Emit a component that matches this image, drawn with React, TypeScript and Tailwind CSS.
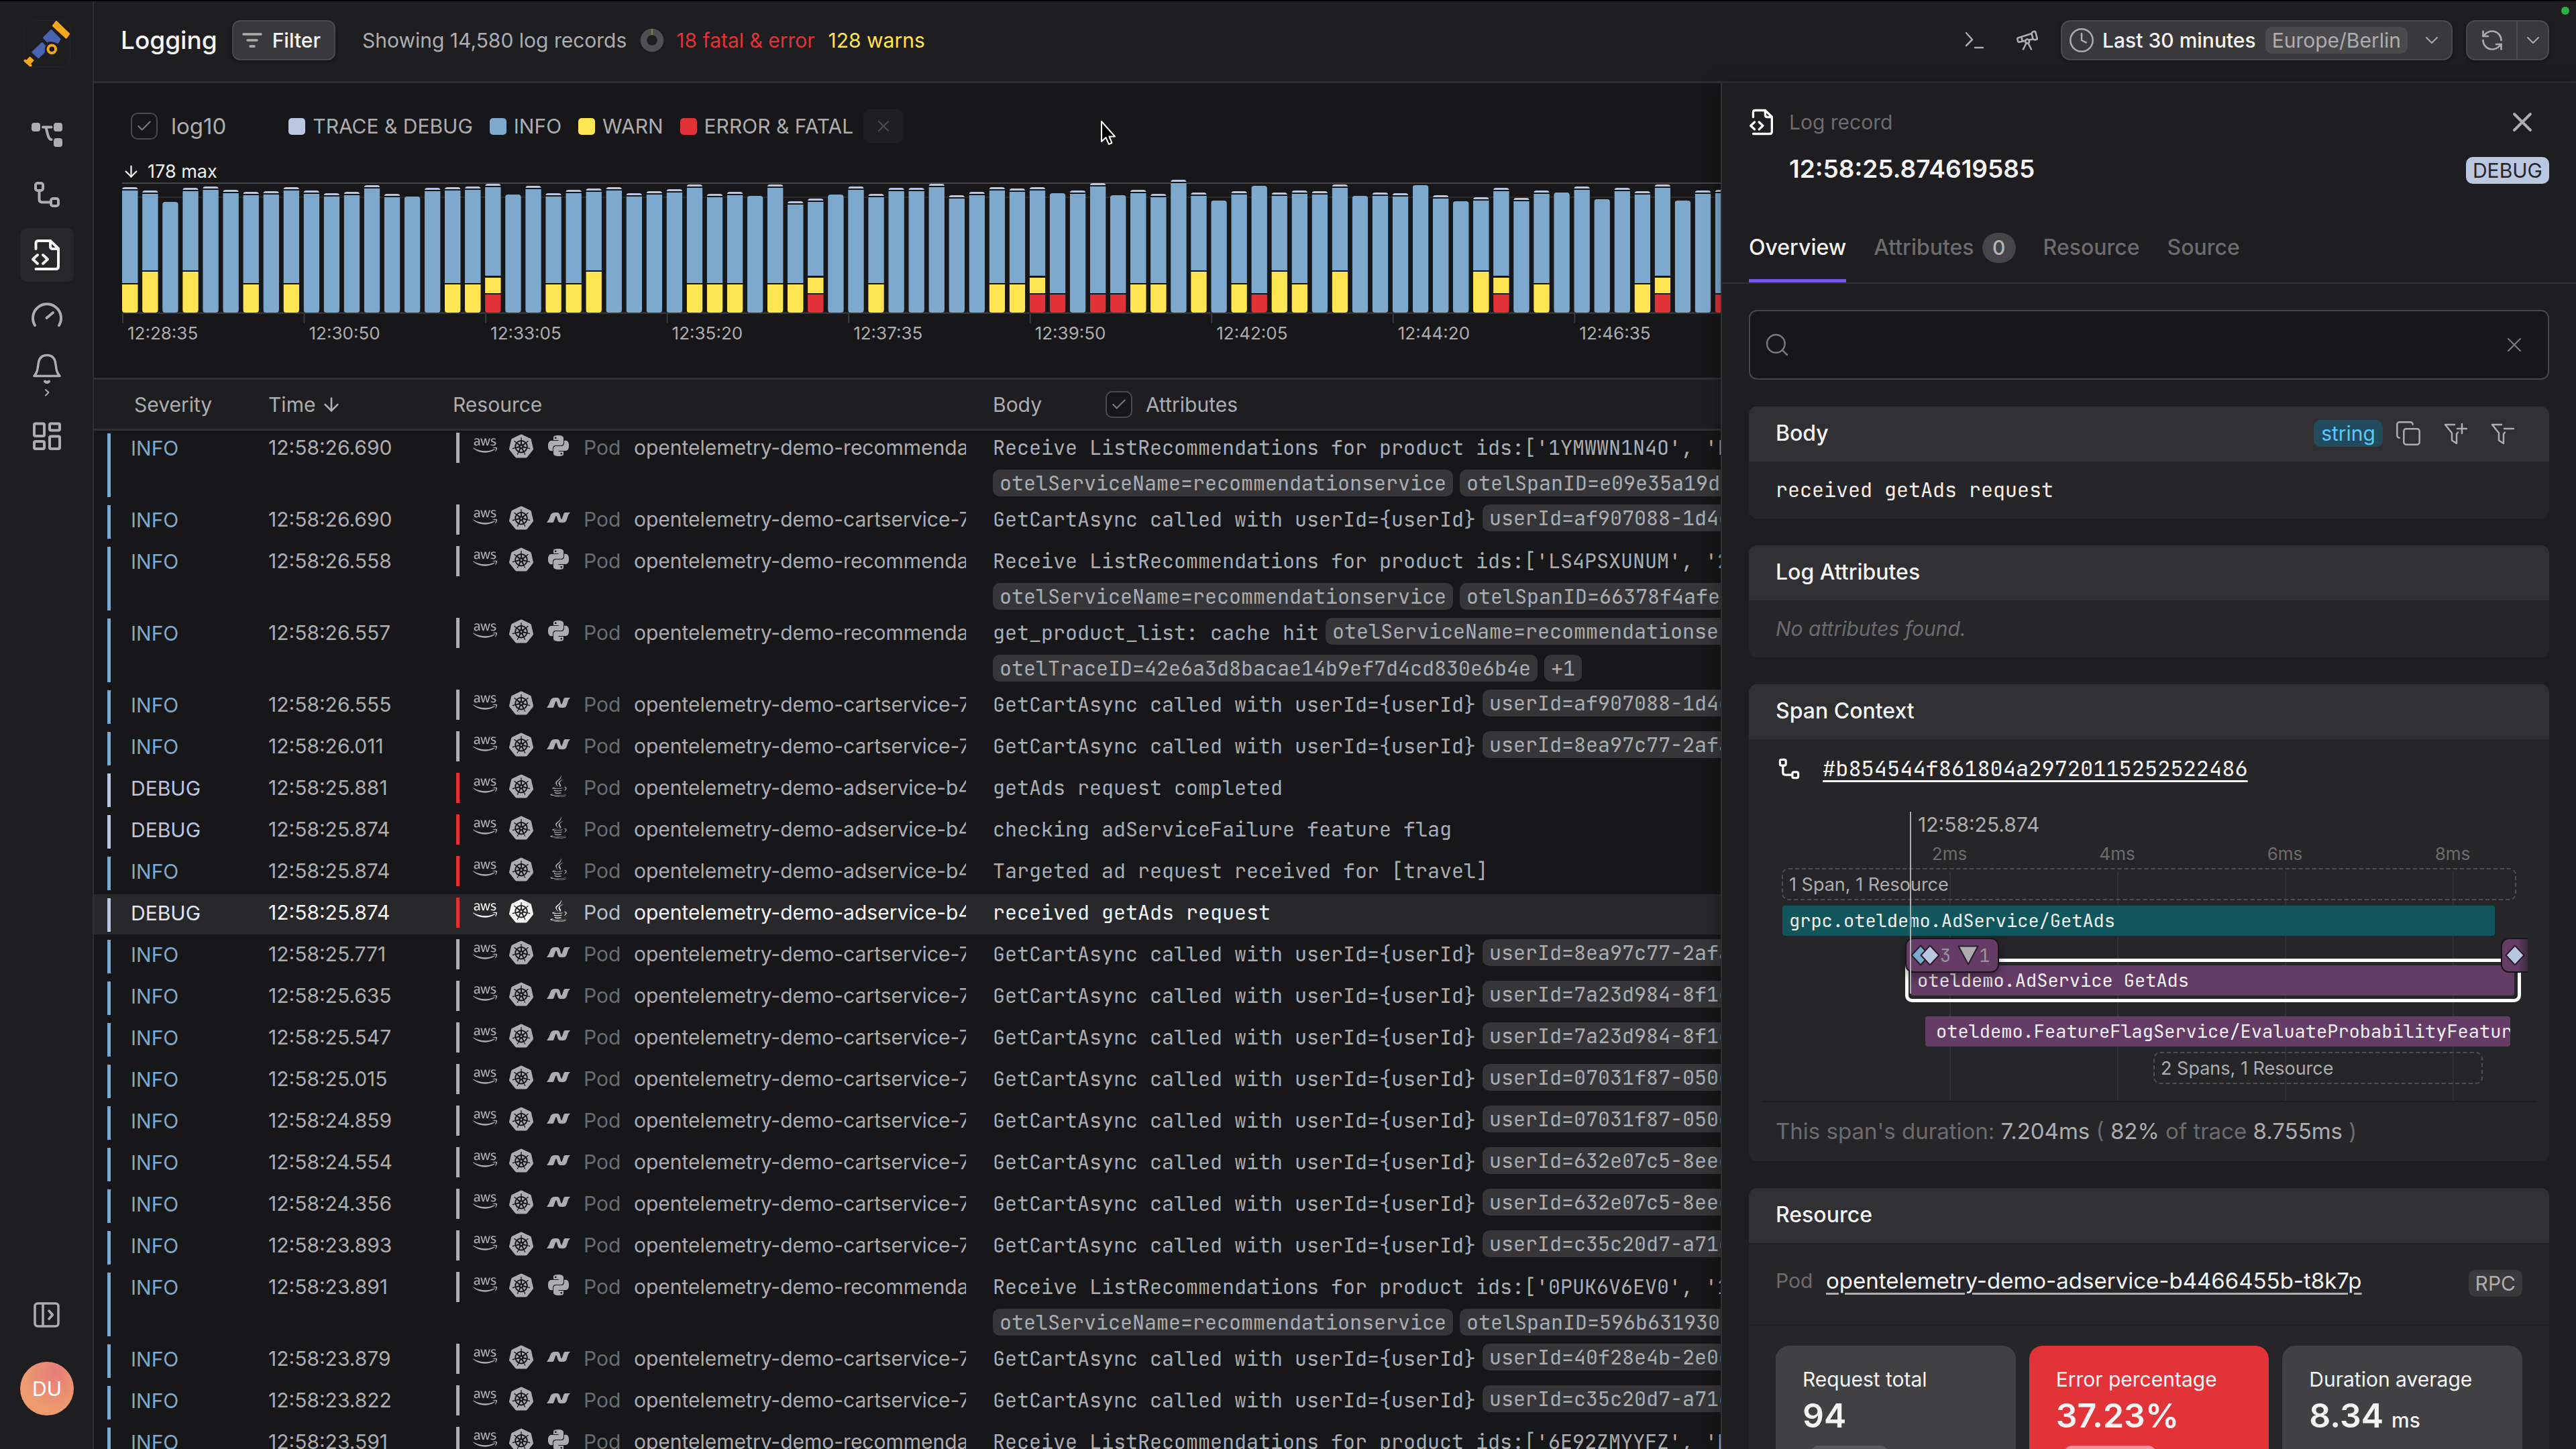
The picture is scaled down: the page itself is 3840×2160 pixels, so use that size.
import type { ReactNode } from 'react';
import { Check, ChevronDown, Clock, Copy, RefreshCcw, Search, Telescope, X, ArrowDown } from 'lucide-react';
import { FaAws, FaJava } from 'react-icons/fa';
import { SiKubernetes, SiPython } from 'react-icons/si';

/* ---------- icons ---------- */

function NavSvg({ children }: { children: ReactNode }) {
  return (
    <svg viewBox="0 0 80 80" className="size-20" fill="none" stroke="currentColor" strokeWidth="4" strokeLinecap="round" strokeLinejoin="round" aria-hidden="true">
      {children}
    </svg>
  );
}

const filePaths = (
  <>
    <path d="M23.5 31V22.5Q23.5 19 27 19H45L57 30.5V57Q57 61 53 61H23.5" />
    <path d="M45 19V27Q45 31 49 31H57" />
    <path d="M26 40L19 46.5L26 53M34 40L41 46.5L34 53" />
  </>
);

const spanPaths = (
  <>
    <rect x="23" y="23" width="11" height="11" rx="3" />
    <rect x="46" y="46" width="11" height="11" rx="3" />
    <path d="M28.5 35V47Q28.5 51.5 33 51.5H45" />
  </>
);

function Logo() {
  return (
    <svg viewBox="0 0 70 70" className="size-[70px]" aria-hidden="true">
      <rect x="0.5" y="0.5" width="69" height="69" rx="14" fill="none" stroke="#252527" />
      <g strokeLinejoin="round" strokeWidth="3">
        <path d="M49 2.5L67.5 20.5L63.5 26L44.5 8.5Z" fill="#f5a81c" stroke="#f5a81c" />
        <path d="M41.3 15.5L54 28.5L51 33.5Q42 28.5 35.5 31.5L30.5 26.3Z" fill="#4a63b0" stroke="#4a63b0" />
        <path d="M27.7 34.5L31.5 38.5Q29.5 43 30.5 47.5L22.3 55.5L14 47.8Z" fill="#4a63b0" stroke="#4a63b0" />
        <path d="M9.5 56L14 60L10 64L6 60Z" fill="#f5a81c" stroke="#f5a81c" />
        <path d="M2.5 60.5L10.5 67.5" stroke="#f5a81c" strokeWidth="4" strokeLinecap="round" />
      </g>
      <circle cx="42.3" cy="43.2" r="5.8" fill="none" stroke="#f5a81c" strokeWidth="4" />
    </svg>
  );
}

function NetIcon() {
  return (
    <svg viewBox="0 0 35 15" className="w-[35px] h-[15px]" fill="currentColor" aria-hidden="true">
      <path d="M0 15Q4 10 5.500 4.500Q7 0 12 0H15.500Q18.500 0 19.500 3.500L21 8.500Q22 11.500 23 8.500L25.500 1.500Q26 0 27.500 0H35Q32.500 2 31 7L29.800 11Q28.500 15 24.500 15H20.500Q17.500 15 16.500 11.500L15 6.500Q14 3.500 13 6.500L10.500 13.500Q10 15 8.500 15Z" />
    </svg>
  );
}

function Funnel({ plus }: { plus?: boolean }) {
  return (
    <svg viewBox="0 0 40 40" className="size-10" fill="none" stroke="currentColor" strokeWidth="2.500" strokeLinecap="round" strokeLinejoin="round" aria-hidden="true">
      <path d="M19 7H5L15 19.500V30.500L22 35V21L24 18.500" />
      <path d={plus ? 'M30 6V20M23 13H37' : 'M23 13H37'} />
    </svg>
  );
}

/* ---------- histogram ---------- */

type Stack = '' | 'W' | 'WW' | 'R' | 'RW';
const bars: [number, boolean, Stack][] = [
  [279, true, 'W'], [284, true, 'WW'], [301, false, ''], [280, true, 'WW'], [278, true, ''], [283, true, ''],
  [286, true, 'W'], [285, true, ''], [279, true, 'W'], [284, true, ''], [288, true, ''], [286, true, ''],
  [276, true, ''], [289, true, ''], [293, false, ''], [280, true, ''], [279, true, 'W'], [278, true, 'W'],
  [274, true, 'RW'], [290, false, ''], [277, true, ''], [288, true, 'W'], [283, true, 'W'], [281, true, 'WW'],
  [279, true, ''], [288, true, ''], [285, true, ''], [282, true, ''], [275, true, 'W'], [289, true, 'W'],
  [286, true, 'W'], [292, false, ''], [275, true, 'W'], [300, true, 'W'], [296, true, 'RW'], [290, false, ''],
  [278, true, ''], [289, true, 'W'], [280, true, ''], [280, true, ''], [274, true, ''], [291, true, ''],
  [286, true, ''], [279, true, 'W'], [281, true, 'W'], [279, true, 'RW'], [288, false, 'R'], [284, true, ''],
  [273, true, 'R'], [291, false, 'R'], [283, true, 'W'], [289, true, 'W'], [268, true, ''], [287, true, 'WW'],
  [299, false, ''], [285, true, 'W'], [277, false, 'R'], [287, true, 'WW'], [284, true, 'W'], [285, true, ''],
  [275, true, 'WW'], [292, false, ''], [287, true, ''], [288, true, ''], [276, false, ''], [291, true, ''],
  [300, false, ''], [294, true, 'WW'], [280, true, 'RW'], [295, true, ''], [284, true, 'W'], [287, false, ''],
  [278, true, ''], [297, false, ''], [280, true, ''], [285, true, 'W'], [275, true, 'RW'], [299, false, ''],
  [284, true, ''], [283, true, 'R'],
];
const ticks = ['12:28:35', '12:30:50', '12:33:05', '12:35:20', '12:37:35', '12:39:50', '12:42:05', '12:44:20', '12:46:35'];
const PITCH = 30.06;
const blueEnd: Record<Stack, number> = { '': 198, W: 154, WW: 135, R: 169, RW: 143 };

function Histogram() {
  return (
    <svg className="block w-full h-[247px]" fontFamily="Inter" fontSize="26" aria-label="Log records over time">
      <rect x="0" y="4" width="100%" height="2" fill="#464648" />
      <rect x="0" y="25" width="100%" height="2" fill="#29292b" />
      <rect x="0" y="197" width="100%" height="3" fill="#323234" />
      <defs>
        <clipPath id="bars">
          {bars.map(([top], i) => (
            <rect key={i} x={i * PITCH} y={top - 268} width="23.500" height={466 - top} rx="4" />
          ))}
        </clipPath>
      </defs>
      <g clipPath="url(#bars)">
        {bars.map(([top, debug, stack], i) => {
          const x = i * PITCH;
          const y = top - 268;
          const by = debug ? y + 5 : y;
          return (
            <g key={i}>
              <rect x={x} y={y} width="24" height={198 - y} fill="#171719" />
              {debug && <rect x={x} y={y} width="24" height="3" fill="#b9c7e1" />}
              <rect x={x} y={by} width="24" height={blueEnd[stack] - by} fill="#7ea9cf" />
              {stack === 'W' && <rect x={x} y="156" width="24" height="42" fill="#ffe551" />}
              {stack === 'WW' && <rect x={x} y="137" width="24" height="61" fill="#ffe551" />}
              {stack === 'RW' && <rect x={x} y="146" width="24" height="23" fill="#ffe551" />}
              {(stack === 'R' || stack === 'RW') && <rect x={x} y="171" width="24" height="27" fill="#e13238" />}
            </g>
          );
        })}
      </g>
      {ticks.map((t, i) => (
        <g key={t}>
          <rect x={i * 9 * PITCH} y="200" width="2" height="14" fill="#3a3a3c" />
          <text x={i * 9 * PITCH + 8} y="238" fill="#adadaf">{t}</text>
        </g>
      ))}
    </svg>
  );
}

/* ---------- log rows ---------- */

type Lang = 'py' | 'net' | 'java';
type Row = { sev: 'INFO' | 'DEBUG'; time: string; lang: Lang; body: string; chips?: string[]; more?: string[]; selected?: boolean };

const cart = (time: string, user: string): Row => ({
  sev: 'INFO', time, lang: 'net', body: 'GetCartAsync called with userId={userId}', chips: [`userId=${user}`],
});
const reco = (time: string, ids: string, span: string): Row => ({
  sev: 'INFO', time, lang: 'py', body: `Receive ListRecommendations for product ids:[${ids}`,
  more: ['otelServiceName=recommendationservice', `otelSpanID=${span}`],
});

const rows: Row[] = [
  reco('12:58:26.690', "'1YMWWN1N4O', 'L9ECAV7KIM'", 'e09e35a19d4c'),
  cart('12:58:26.690', 'af907088-1d4c'),
  reco('12:58:26.558', "'LS4PSXUNUM', '2ZYFJ3GM2N'", '66378f4afe12'),
  {
    sev: 'INFO', time: '12:58:26.557', lang: 'py', body: 'get_product_list: cache hit',
    chips: ['otelServiceName=recommendationservice'], more: ['otelTraceID=42e6a3d8bacae14b9ef7d4cd830e6b4e', '+1'],
  },
  cart('12:58:26.555', 'af907088-1d4c'),
  cart('12:58:26.011', '8ea97c77-2afa'),
  { sev: 'DEBUG', time: '12:58:25.881', lang: 'java', body: 'getAds request completed' },
  { sev: 'DEBUG', time: '12:58:25.874', lang: 'java', body: 'checking adServiceFailure feature flag' },
  { sev: 'INFO', time: '12:58:25.874', lang: 'java', body: 'Targeted ad request received for [travel]' },
  { sev: 'DEBUG', time: '12:58:25.874', lang: 'java', body: 'received getAds request', selected: true },
  cart('12:58:25.771', '8ea97c77-2afa'),
  cart('12:58:25.635', '7a23d984-8f1c'),
  cart('12:58:25.547', '7a23d984-8f1c'),
  cart('12:58:25.015', '07031f87-050c'),
  cart('12:58:24.859', '07031f87-050c'),
  cart('12:58:24.554', '632e07c5-8eec'),
  cart('12:58:24.356', '632e07c5-8eec'),
  cart('12:58:23.893', 'c35c20d7-a71c'),
  reco('12:58:23.891', "'0PUK6V6EV0', '1YMWWN1N4O'", '596b6319302a'),
  cart('12:58:23.879', '40f28e4b-2e0c'),
  cart('12:58:23.822', 'c35c20d7-a71c'),
  reco('12:58:23.591', "'6E92ZMYYFZ', 'HQTGWGPNH4'", '1d4a0c77e9b2'),
];

const pods: Record<Lang, string> = {
  py: 'opentelemetry-demo-recommendationservice',
  net: 'opentelemetry-demo-cartservice-7d9c',
  java: 'opentelemetry-demo-adservice-b4466455b-t8k7p',
};

function Chip({ children }: { children: ReactNode }) {
  return <span className="h-10 leading-10 px-[10px] rounded-[10px] bg-[#363638] whitespace-nowrap shrink-0">{children}</span>;
}

function LogRow({ row }: { row: Row }) {
  const { sev, time, lang, body, chips = [], more, selected } = row;
  const sevText = selected ? 'text-[#dfe6f3]' : sev === 'INFO' ? 'text-[#7ea9cf]' : 'text-[#b9c7e1]';
  return (
    <tr className={`flex mb-[2px] min-h-[60px] leading-[45px] ${selected ? 'bg-[#28282a] text-[#f5f5f6]' : ''}`}>
      <td className={`w-[260px] shrink-0 flex pl-5 pt-[6px] pb-1 ${sevText}`}>
        <span className={`w-[5px] mr-[30px] ${sev === 'INFO' ? 'bg-[#7ea9cf]' : 'bg-[#b9c7e1]'}`} />
        {sev}
      </td>
      <td className="w-[280px] shrink-0 pt-[5px]">{time}</td>
      <td className="w-[760px] shrink-0 pt-[5px]">
        <div className="flex items-center overflow-hidden whitespace-nowrap h-[45px]">
          <span className={`w-[5px] h-[45px] shrink-0 ${lang === 'java' ? 'bg-[#e13238]' : 'bg-[#aeaeb0]'}`} />
          <FaAws className="size-9 ml-5 mb-2 shrink-0" />
          <SiKubernetes className="size-9 ml-[18px] mb-[6px] shrink-0" />
          <span className="w-[35px] ml-5 mb-[6px] shrink-0 flex justify-center">
            {lang === 'py' && <SiPython className="size-[31px]" />}
            {lang === 'net' && <NetIcon />}
            {lang === 'java' && <FaJava className="size-[33px]" />}
          </span>
          <span className={`ml-5 w-[75px] shrink-0 ${selected ? 'text-[#bdbdbf]' : 'text-[#6c6c6e]'}`}>Pod</span>
          <span>{pods[lang]}</span>
        </div>
      </td>
      <td className="flex-1 min-w-0 pl-10 pt-[5px] pb-[5px] overflow-hidden font-['JetBrains_Mono','DejaVu_Sans_Mono',monospace]">
        <div className="flex flex-col gap-[15px]">
          <div className="flex h-10 gap-[10px]">
            <span className="whitespace-nowrap">{body}</span>
            {chips.map((c) => <Chip key={c}>{c}</Chip>)}
          </div>
          {more && (
            <div className="flex h-10 gap-[10px]">
              {more.map((c) => <Chip key={c}>{c}</Chip>)}
            </div>
          )}
        </div>
      </td>
    </tr>
  );
}

/* ---------- shared controls ---------- */

function Tick({ children }: { children: ReactNode }) {
  return (
    <label className="flex items-center gap-5">
      <span className="relative size-10">
        <input type="checkbox" defaultChecked className="block appearance-none size-10 rounded-[10px] border-2 border-[#4a4a4c] bg-[#171719]" />
        <Check className="absolute inset-[7px] size-[26px] text-[#79797b] pointer-events-none" strokeWidth={2} />
      </span>
      {children}
    </label>
  );
}

function Card({ title, actions, children }: { title: string; actions?: ReactNode; children: ReactNode }) {
  return (
    <section className="rounded-[12px] overflow-hidden bg-[#262628]">
      <header className="h-[82px] px-10 pb-[2px] flex items-center justify-between bg-[#303032]">
        <h2 className="text-[32px] font-medium text-[#f5f5f6]">{title}</h2>
        {actions}
      </header>
      {children}
    </section>
  );
}

/* ---------- span timeline ---------- */

const mono = "font-['JetBrains_Mono','DejaVu_Sans_Mono',monospace]";

function Diamond({ className }: { className: string }) {
  return (
    <svg viewBox="0 0 30 32" className={`w-[30px] h-8 shrink-0 ${className}`} aria-hidden="true">
      <path d="M15 1.500L28.500 16L15 30.500L1.500 16Z" fill="currentColor" stroke="#2a1d2c" strokeWidth="2" strokeLinejoin="round" />
    </svg>
  );
}

function SpanTimeline() {
  return (
    <div className="relative mx-5 h-[475px] border-b-2 border-[#1e1e20] text-[27px] overflow-hidden">
      <span className="absolute left-[279px] top-[131px] bottom-0 w-[2px] bg-[#323234]" />
      <span className="absolute left-[529px] top-[131px] bottom-0 w-[2px] bg-[#323234]" />
      <span className="absolute left-[779px] top-[131px] bottom-0 w-[2px] bg-[#323234]" />
      <span className="absolute left-[1029px] top-[131px] bottom-0 w-[2px] bg-[#323234]" />
      <span className="absolute left-[229px] w-[100px] top-[90px] leading-[30px] text-center text-[26px] text-[#6c6c6e]">2ms</span>
      <span className="absolute left-[479px] w-[100px] top-[90px] leading-[30px] text-center text-[26px] text-[#6c6c6e]">4ms</span>
      <span className="absolute left-[729px] w-[100px] top-[90px] leading-[30px] text-center text-[26px] text-[#6c6c6e]">6ms</span>
      <span className="absolute left-[979px] w-[100px] top-[90px] leading-[30px] text-center text-[26px] text-[#6c6c6e]">8ms</span>
      <span className="absolute left-[232px] top-[43px] leading-9 text-[30px] text-[#adadaf]">12:58:25.874</span>

      <div className="absolute left-[29px] top-[126px] w-[1095px] h-12 leading-[46px] pl-[9px] rounded-[10px] border-2 border-dashed border-[#4f4f51] text-[#adadaf]">1 Span, 1 Resource</div>
      <div className={`absolute left-[30px] top-[182px] w-[1062px] h-[45px] leading-[45px] pl-[10px] rounded-[4px] bg-[#11565c] text-[#f0f0f1] ${mono}`}>grpc.oteldemo.AdService/GetAds</div>
      <div className="absolute left-[213px] top-[261px] w-[918px] h-[65px] rounded-[10px] border-[5px] border-white" />
      <div className={`absolute left-[221px] top-[271px] w-[900px] h-[45px] leading-[45px] pl-[10px] rounded-[4px] bg-[#643c66] text-[#f0f0f1] ${mono}`}>oteldemo.AdService GetAds</div>
      <div className={`absolute left-[213px] top-[230px] w-[140px] h-[52px] flex items-center pl-[6px] rounded-[12px] border-2 border-[#171719] bg-[#643c66] text-[#98949b] shadow-[0_8px_14px_rgba(0,0,0,0.35)] ${mono}`}>
        <Diamond className="text-[#7ea9cf]" />
        <Diamond className="text-[#b9c7e1] -ml-4" />
        3
        <svg viewBox="0 0 32 30" className="w-8 h-[30px] ml-[10px] shrink-0" aria-hidden="true">
          <path d="M1.500 1.500H30.500L16 28.500Z" fill="#adadaf" stroke="#2a1d2c" strokeWidth="2" strokeLinejoin="round" />
        </svg>
        1
      </div>
      <div className="absolute left-[1101px] top-[230px] w-10 h-[52px] flex items-center pl-1 rounded-l-[12px] border-2 border-r-0 border-[#171719] bg-linear-to-r from-[#643c66] from-60% to-[#3a2c3c]">
        <Diamond className="text-[#b9c7e1]" />
      </div>
      <div className={`absolute left-[243px] top-[347px] w-[872px] h-[45px] leading-[45px] pl-4 rounded-[4px] bg-[#643c66] text-[#f0f0f1] overflow-hidden whitespace-nowrap ${mono}`}>oteldemo.FeatureFlagService/EvaluateProbabilityFeatureFlag</div>
      <div className="absolute left-[583px] top-[400px] w-[491px] h-12 leading-[46px] pl-[9px] rounded-[10px] border-2 border-dashed border-[#4f4f51] text-[#adadaf]">2 Spans, 1 Resource</div>
      <span className="absolute left-[220px] top-[42px] w-[2px] h-[271px] bg-[#adadaf]" />
    </div>
  );
}

function Stat({ label, value, unit, alert, pill }: { label: string; value: string; unit?: string; alert?: boolean; pill: string }) {
  return (
    <div className={`rounded-[20px] h-[300px] pt-8 px-10 text-[#f5f5f6] ${alert ? 'bg-[#e23338]' : 'bg-[#414143]'}`}>
      <div className="text-[30px] leading-9">{label}</div>
      <div className="mt-[11px] text-[50px] leading-[50px] font-semibold">
        {value}
        {unit && <span className="text-[30px] font-medium ml-3">{unit}</span>}
      </div>
      <div className={`mt-5 h-10 ml-3 rounded-[12px] ${pill} ${alert ? 'bg-[#ff8f93]' : 'bg-[#5a5a5c]'}`} />
    </div>
  );
}

/* ---------- side panel ---------- */

function DetailPanel() {
  return (
    <aside className="relative z-10 w-[1275px] shrink-0 border-l-2 border-[#303032] bg-[#1e1e20] overflow-hidden shadow-[0_0_24px_rgba(0,0,0,0.35)]">
      <div className="px-10 pt-7">
        <div className="h-[60px] flex items-center">
          <svg viewBox="16 16 44 48" className="w-[37px] h-10 text-white mr-[23px]" fill="none" stroke="currentColor" strokeWidth="4" strokeLinecap="round" strokeLinejoin="round" aria-hidden="true">{filePaths}</svg>
          <span className="text-[#6c6c6e]">Log record</span>
          <button aria-label="Close" className="ml-auto size-20 flex items-center justify-center text-[#adadaf]">
            <X className="size-12" strokeWidth={2} />
          </button>
        </div>
        <div className="mt-3 h-[60px] flex items-center justify-between">
          <h1 className="pl-[60px] pb-1 text-[37px] font-semibold text-[#f5f5f6]">12:58:25.874619585</h1>
          <span className="h-10 leading-10 px-[10px] rounded-[10px] bg-[#b9c7e1] text-[#262628]">DEBUG</span>
        </div>
      </div>
      <nav className="mt-[33px] px-10 flex gap-[41px] border-b-2 border-[#303032] text-[32px] font-medium text-[#6c6c6e]">
        <button className="relative h-[104px] text-[#f5f5f6]">
          Overview
          <span className="absolute inset-x-0 bottom-0 h-[5px] bg-[#7557e4]" />
        </button>
        <button className="h-[104px] flex items-center gap-3">
          Attributes
          <span className="w-[50px] h-[45px] leading-[45px] rounded-full bg-[#464648] text-[#b4b4b6] text-[30px] text-center">0</span>
        </button>
        <button className="h-[104px]">Resource</button>
        <button className="h-[104px]">Source</button>
      </nav>
      <div className="px-10 pt-[39px] flex flex-col gap-10">
        <div className="h-[104px] px-5 flex items-center rounded-[12px] border-2 border-[#464648] bg-[#171719] text-[#79797b]">
          <Search className="size-10" strokeWidth={1.5} />
          <input aria-label="Search" className="flex-1 min-w-0 h-full px-4 bg-transparent outline-none text-[#f5f5f6]" />
          <button aria-label="Clear" className="w-[60px] flex justify-center"><X className="size-9" strokeWidth={1.5} /></button>
        </div>

        <Card
          title="Body"
          actions={
            <div className="flex items-center text-[#adadaf] gap-[30px] mr-[10px]">
              <span className="h-10 leading-10 px-[11px] rounded-[10px] bg-[#234b5e] text-[#5bc8fb] -mr-3">string</span>
              <button aria-label="Copy"><Copy className="size-10" strokeWidth={1.5} /></button>
              <button aria-label="Include in filter"><Funnel plus /></button>
              <button aria-label="Exclude from filter"><Funnel /></button>
            </div>
          }
        >
          <div className={`h-[85px] px-10 leading-[85px] text-[#f0f0f1] ${mono}`}>received getAds request</div>
        </Card>

        <Card title="Log Attributes">
          <div className="h-[85px] px-10 leading-[85px] italic text-[#6c6c6e]">No attributes found.</div>
        </Card>

        <Card title="Span Context">
          <div className="pt-[22px] px-10 h-[66px] flex items-center">
            <svg viewBox="20 20 40 40" className="size-8 ml-1 mr-[34px] text-white" fill="none" stroke="currentColor" strokeWidth="4" aria-hidden="true">{spanPaths}</svg>
            <a href="#trace" className={`text-[32px] text-[#f5f5f6] underline decoration-[3px] underline-offset-[6px] ${mono}`}>#b854544f861804a29720115252522486</a>
          </div>
          <SpanTimeline />
          <p className="pt-5 pb-[22px] px-10 leading-[46px] text-[33px] text-[#6c6c6e]">
            This span's duration: <span className="text-[#adadaf]">7.204ms</span> ( <span className="text-[#adadaf]">82%</span> of trace <span className="text-[#adadaf]">8.755ms</span> )
          </p>
        </Card>

        <Card title="Resource">
          <div className="h-[123px] px-10 pb-1 flex items-center border-y-2 border-[#1e1e20]">
            <span className="w-[75px] text-[#6c6c6e] pb-2">Pod</span>
            <a href="#pod" className="pb-2 text-[33px] text-[#f5f5f6] underline decoration-[3px] decoration-[#adadaf] underline-offset-[6px]">opentelemetry-demo-adservice-b4466455b-t8k7p</a>
            <span className="ml-auto h-10 leading-10 px-[10px] rounded-[10px] bg-[#3a3a3c] text-[#adadaf]">RPC</span>
          </div>
          <div className="px-10 pt-[30px] grid grid-cols-3 gap-5">
            <Stat label="Request total" value="94" pill="w-[116px]" />
            <Stat label="Error percentage" value="37.23%" alert pill="w-[137px]" />
            <Stat label="Duration average" value="8.34" unit="ms" pill="w-[121px]" />
          </div>
        </Card>
      </div>
    </aside>
  );
}

const legend = [
  { name: 'TRACE & DEBUG', color: 'bg-[#b9c7e1]' },
  { name: 'INFO', color: 'bg-[#7ea9cf]' },
  { name: 'WARN', color: 'bg-[#ffe551]' },
  { name: 'ERROR & FATAL', color: 'bg-[#e13238]' },
];

const headerButton = 'border-2 border-[#4a4a4c] bg-[#39393b] shadow-[0_2px_5px_rgba(0,0,0,0.4)]';

export default function App() {
  return (
    <div className="h-screen flex overflow-hidden border-t-2 border-black bg-[#171719] font-['Inter',sans-serif] text-[30px] leading-9 text-[#adadaf]">
      <nav className="w-[140px] shrink-0 pl-[2px] pt-7 pb-[50px] flex flex-col items-center bg-[#1e1e20] border-r-2 border-[#2e2e30]">
        <a href="#home" aria-label="Home"><Logo /></a>
        <div className="mt-[60px] flex flex-col gap-[10px]">
          <button aria-label="Services">
            <NavSvg>
              <g fill="currentColor" stroke="none">
                <rect x="17" y="23" width="13" height="13" rx="4" />
                <rect x="50" y="23" width="13" height="13" rx="4" />
                <rect x="50" y="46" width="13" height="13" rx="4" />
              </g>
              <path d="M34 29.500H46.500M38.500 30L41 40Q43 48 46.500 48" />
            </NavSvg>
          </button>
          <button aria-label="Tracing"><NavSvg>{spanPaths}</NavSvg></button>
          <button aria-label="Logging" className="rounded-[10px] bg-[#272729] text-[#f5f5f6]"><NavSvg>{filePaths}</NavSvg></button>
          <button aria-label="Metrics">
            <NavSvg><path d="M22 55A21 21 0 1 1 58 55M39.500 44L49 36" /></NavSvg>
          </button>
          <button aria-label="Alerting">
            <NavSvg>
              <path strokeWidth="3.500" d="M21 40.500H59C54 35 54 30 53 23C52 13.500 47 9.500 40 9.500C33 9.500 28 13.500 27 23C26 30 26 35 21 40.500Z" />
              <path d="M37 48.500Q40 51.500 43 48.500" />
              <path strokeWidth="2" d="M38 61L42.500 65L38 69.500" />
            </NavSvg>
          </button>
          <button aria-label="Dashboards">
            <NavSvg>
              <rect x="21" y="21.500" width="15" height="18.500" rx="2" />
              <rect x="44" y="21.500" width="15" height="10" rx="2" />
              <rect x="21" y="48" width="15" height="11" rx="2" />
              <rect x="44" y="40.500" width="15" height="18.500" rx="2" />
            </NavSvg>
          </button>
        </div>
        <button aria-label="Expand sidebar" className="mt-auto">
          <NavSvg>
            <g strokeWidth="3.500">
              <rect x="22" y="23" width="35" height="34" rx="4" />
              <path d="M34 23V57M43 34L48.500 40L43 46" />
            </g>
          </NavSvg>
        </button>
        <button aria-label="Account" className="mt-[30px] size-20 rounded-full bg-radial-[at_65%_20%] from-[#e67c78] to-[#ec9a6e] to-60% text-white">DU</button>
      </nav>

      <div className="flex-1 min-w-0 flex flex-col">
        <header className="relative h-[122px] shrink-0 pl-10 pr-10 pb-[3px] flex items-center bg-[#1e1e20] border-b-3 border-[#303032]">
          <h1 className="text-[37px] font-medium text-[#f5f5f6]">Logging</h1>
          <button className={`ml-[22px] h-[60px] pl-3 pr-5 flex items-center rounded-[12px] font-medium text-[#f5f5f6] ${headerButton}`}>
            <svg viewBox="0 0 32 24" className="w-8 h-6 mr-[14px]" stroke="#adadaf" strokeWidth="3.500" strokeLinecap="round" aria-hidden="true">
              <path d="M3 3H29M9 12H23M13 21H19" />
            </svg>
            Filter
          </button>
          <span className="ml-10">Showing 14,580 log records</span>
          <svg viewBox="0 0 36 36" className="size-9 ml-5 mr-[18px]" fill="none" aria-hidden="true">
            <circle cx="18" cy="18" r="12.500" stroke="#505052" strokeWidth="9.500" />
            <path d="M18 1V10" stroke="#9b9145" strokeWidth="1.500" />
          </svg>
          <span className="text-[#e13238]">18 fatal &amp; error</span>
          <span className="ml-5 text-[#ffe551]">128 warns</span>

          <div className="ml-auto flex items-center">
            <button aria-label="Terminal">
              <svg viewBox="0 0 32 32" className="size-8" fill="none" stroke="currentColor" strokeWidth="2.500" strokeLinecap="round" strokeLinejoin="round" aria-hidden="true">
                <path d="M4 5L13 15L4 24M17 27H29" />
              </svg>
            </button>
            <button aria-label="Explore" className="ml-[45px]"><Telescope className="size-9" strokeWidth={1.75} /></button>
            <button className={`ml-8 h-[60px] pl-[9px] pr-[13px] flex items-center rounded-[14px] ${headerButton}`}>
              <Clock className="size-10" strokeWidth={1.5} />
              <span className="ml-[11px] text-[#f5f5f6] font-medium">Last 30 minutes</span>
              <span className="ml-[14px] h-10 leading-10 px-[10px] rounded-[10px] bg-[#4a4a4c]">Europe/Berlin</span>
              <ChevronDown className="ml-5 size-8" strokeWidth={1.5} />
            </button>
            <div className={`ml-5 h-[60px] flex items-stretch rounded-[14px] ${headerButton}`}>
              <button aria-label="Refresh" className="w-[75px] flex items-center justify-center border-r-2 border-[#4a4a4c]">
                <RefreshCcw className="size-9" strokeWidth={1.75} />
              </button>
              <button aria-label="Refresh options" className="w-[45px] flex items-center justify-center">
                <ChevronDown className="size-8" strokeWidth={1.5} />
              </button>
            </div>
          </div>
          <span className="absolute right-[10px] top-2 size-3 rounded-full bg-[#2bb047]" />
        </header>

        <div className="flex-1 min-h-0 flex">
          <main className="relative flex-1 min-w-0 overflow-hidden">
            <section className="pl-[42px] pt-[39px] h-[439px]">
              <div className="h-[50px] pl-[13px] flex items-center">
                <Tick><span className="text-[33px]">log10</span></Tick>
                <ul className="ml-[93px] flex gap-[25px]">
                  {legend.map(({ name, color }) => (
                    <li key={name} className="flex items-center gap-[11px]">
                      <span className={`size-[25px] rounded-[5px] ${color}`} />
                      {name}
                    </li>
                  ))}
                </ul>
                <button aria-label="Close legend" className="ml-[15px] w-[60px] h-[50px] rounded-[10px] bg-[#1f1f21] text-[#4a4a4c] flex items-center justify-center">
                  <X className="size-7" strokeWidth={2} />
                </button>
              </div>
              <div className="mt-[30px] h-[25px] flex items-center text-[27px] leading-[25px] text-[#f0f0f1]">
                <ArrowDown className="size-[27px] mr-[11px]" strokeWidth={2} />
                178 max
              </div>
              <Histogram />
            </section>

            <table className="block w-full text-left">
              <thead className="relative z-10 block bg-[#1e1e20] border-y-3 border-[#303032]">
                <tr className="flex h-[73px] items-center">
                  <th className="w-[260px] shrink-0 pl-[60px] font-normal">Severity</th>
                  <th className="w-[275px] shrink-0 font-normal"><button className="flex items-center gap-2">Time <ArrowDown className="size-8" strokeWidth={2} /></button></th>
                  <th className="w-[805px] shrink-0 font-normal">Resource</th>
                  <th className="w-[168px] shrink-0 font-normal">Body</th>
                  <th className="font-normal"><Tick>Attributes</Tick></th>
                </tr>
              </thead>
              <tbody className="block -mt-[2px]">
                {rows.map((row, i) => <LogRow key={i} row={row} />)}
              </tbody>
            </table>

            <svg viewBox="0 0 24 38" className="absolute left-[1500px] top-[55px] w-6 h-[38px]" aria-hidden="true">
              <path d="M2 2V32L8.500 26L13 36L17.500 34L13.500 24.500H22Z" fill="#000" stroke="#fff" strokeWidth="2" strokeLinejoin="round" />
            </svg>
          </main>
          <DetailPanel />
        </div>
      </div>
    </div>
  );
}
